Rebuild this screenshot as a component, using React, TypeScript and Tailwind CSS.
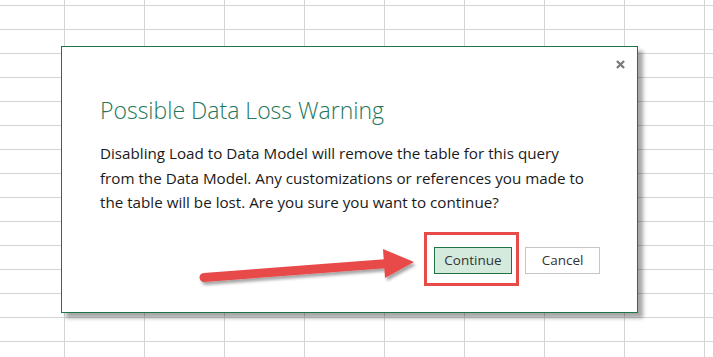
import { X } from 'lucide-react'

export default function App() {
  return (
    <div className="relative h-[357px] w-[713px] overflow-hidden bg-white bg-[linear-gradient(to_right,#d4d4d4_1px,transparent_1px),linear-gradient(to_bottom,#d4d4d4_1px,transparent_1px)] bg-[size:80px_24px] bg-[position:64px_5px] pl-[61px] pt-[46px] font-['Open_Sans',sans-serif]">
      <div className="flex h-[267px] w-[577px] flex-col border border-[#217346] bg-white pr-[11px] pt-[12px] shadow-[5px_5px_4px_rgba(0,0,0,0.35)]">
        <div className="flex h-[10px] justify-end">
          <X className="h-[11px] w-[11px] text-[#7a7a7a]" strokeWidth={5} strokeLinecap="square" />
        </div>

        <h1 className="mt-[25px] pl-[38px] text-[23px] font-light leading-[32px] text-[#23775a]">
          Possible Data Loss Warning
        </h1>

        <p className="mt-[15px] pl-[38px] pr-[4px] text-[15.2px] leading-[24.5px] text-[#1a1a1a]">
          Disabling Load to Data Model will remove the table for this query
          <br />
          from the Data Model. Any customizations or references you made to
          <br />
          the table will be lost. Are you sure you want to continue?
        </p>

        <div className="mt-[32px] flex justify-end gap-[13px] pr-[26px]">
          <button className="h-[27px] w-[78px] border border-[#217346] bg-[#d3eadd] text-[13.5px] text-[#333]">
            Continue
          </button>
          <button className="h-[27px] w-[75px] border border-[#c6c6c6] bg-white text-[13.5px] text-[#333]">
            Cancel
          </button>
        </div>
      </div>

      {/* annotation: red box around Continue */}
      <div className="absolute left-[424px] top-[232px] h-[54px] w-[95px] border-[3px] border-[#e84a4a]" />

      {/* annotation: arrow */}
      <svg className="absolute left-0 top-0" width="713" height="357" viewBox="0 0 713 357">
        <defs>
          <filter id="sh" x="-10%" y="-50%" width="130%" height="200%">
            <feDropShadow dx="2" dy="3" stdDeviation="1.6" floodColor="#000" floodOpacity="0.35" />
          </filter>
        </defs>
        <g filter="url(#sh)" fill="#e84a4a" stroke="#e84a4a">
          <line x1="204" y1="277.5" x2="388" y2="263.5" strokeWidth="9" strokeLinecap="round" />
          <polygon points="383,249 414,262 385,278" strokeWidth="0" />
        </g>
      </svg>
    </div>
  )
}
